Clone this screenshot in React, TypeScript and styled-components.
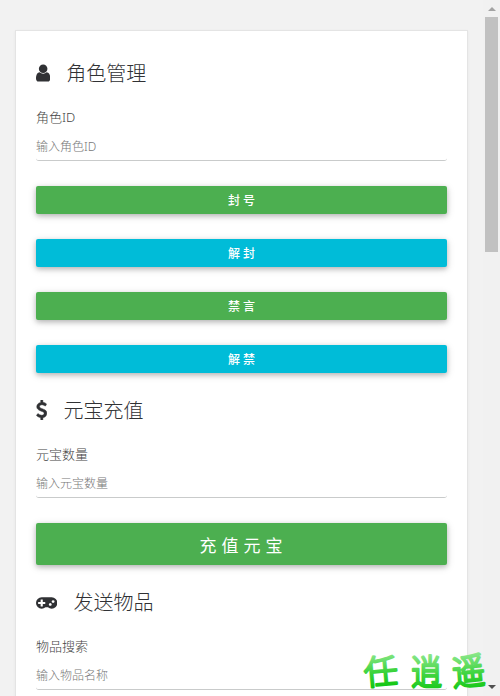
import React from 'react';
import styled, { createGlobalStyle } from 'styled-components';

const GlobalStyle = createGlobalStyle`
  * { box-sizing: border-box; }
  body { margin: 0; overflow: hidden; background: #f2f2f2; }
  button, input { font-family: inherit; }
`;

const Screen = styled.div`
  position: relative;
  display: flex;
  width: 500px;
  height: 696px;
  overflow: hidden;
  background: #f2f2f2;
  font-family: 'Noto Sans', 'Noto Sans CJK SC', sans-serif;
`;

const Page = styled.main`
  width: 483px;
  padding: 30px 15px 0;
`;

const Card = styled.section`
  height: 900px;
  padding: 27px 20px;
  background: #fff;
  border: 1px solid #e4e4e4;
  box-shadow: 0 1px 3px rgba(0, 0, 0, 0.05);
`;

const Heading = styled.h2`
  display: flex;
  align-items: center;
  gap: 16px;
  height: 30px;
  margin: 0 0 19px;
  color: #303134;
  font-family: 'Noto Sans CJK SC', sans-serif;
  font-size: 20px;
  font-weight: 300;
  line-height: 30px;
`;

const Icon = styled.svg<{ $width: number }>`
  flex: none;
  width: ${(p) => p.$width}px;
  height: 20px;
  fill: #303134;
`;

const Label = styled.label`
  display: block;
  height: 20px;
  color: #444;
  font-size: 13px;
  font-weight: 300;
  line-height: 20px;
`;

const Input = styled.input`
  display: block;
  width: 100%;
  height: 28px;
  margin: 6px 0 25px;
  padding: 0;
  color: #555;
  background: transparent;
  border: 0;
  border-bottom: 1px solid #c9cbcb;
  border-radius: 3px;
  outline: 0;
  font-size: 12px;
  font-weight: 300;
  &::placeholder { color: #777; opacity: 1; }
`;

const Button = styled.button<{ $tone: 'green' | 'cyan'; $large?: boolean }>`
  display: block;
  width: 100%;
  height: ${(p) => (p.$large ? 42 : 28)}px;
  margin: 0 0 ${(p) => (p.$large ? 22 : 25)}px;
  padding: ${(p) => (p.$large ? '2px 0 0 4px' : '2px 0 0 3px')};
  color: #fff;
  background: ${(p) => (p.$tone === 'green' ? '#4caf50' : '#00bcd8')};
  border: 0;
  border-radius: 2px;
  box-shadow: 0 2px 5px rgba(0, 0, 0, 0.22), 0 2px 10px rgba(0, 0, 0, 0.12);
  font-size: ${(p) => (p.$large ? 17 : 12)}px;
  font-weight: ${(p) => (p.$large ? 400 : 500)};
  line-height: 1;
  letter-spacing: ${(p) => (p.$large ? 5 : 3)}px;
`;

const Actions = styled.div`
  margin-bottom: -3px;
`;

const ScrollTrack = styled.div`
  display: flex;
  flex-direction: column;
  align-items: center;
  justify-content: space-between;
  width: 17px;
  padding: 7px 2px 7px;
  background: #f1f1f1;
`;

const ScrollThumb = styled.div`
  width: 13px;
  height: 235px;
  margin: 6px 0 auto;
  background: #c1c1c1;
`;

const Arrow = styled.div<{ $down?: boolean }>`
  width: 0;
  border: solid transparent;
  border-width: ${(p) => (p.$down ? '4px 4px 0' : '0 4px 4px')};
  border-top-color: ${(p) => (p.$down ? '#505050' : 'transparent')};
  border-bottom-color: ${(p) => (p.$down ? 'transparent' : '#a3a3a3')};
`;

const Watermark = styled.svg`
  position: absolute;
  left: 360px;
  top: 645px;
  width: 130px;
  height: 51px;
  pointer-events: none;
`;

const Brush = styled.text`
  fill: url(#ink);
  stroke: url(#ink);
  stroke-width: 2.2px;
  stroke-linejoin: round;
  stroke-linecap: round;
  font-family: 'Noto Sans CJK SC', sans-serif;
  font-weight: 300;
`;

function UserIcon() {
  return (
    <Icon $width={14.3} viewBox="256 0 1280 1792">
      <path d="M1536 1399q0 109-62.5 187t-150.5 78h-854q-88 0-150.5-78t-62.5-187q0-85 8.5-160.5t31.5-152 58.5-131 94-89 134.5-34.5q131 128 313 128t313-128q76 0 134.5 34.5t94 89 58.5 131 31.5 152 8.5 160.5zm-256-887q0 159-112.5 271.5t-271.5 112.5-271.5-112.5-112.5-271.5 112.5-271.5 271.5-112.5 271.5 112.5 112.5 271.5z" />
    </Icon>
  );
}

function DollarIcon() {
  return (
    <Icon $width={11.4} viewBox="384 0 1024 1792">
      <path stroke="#303134" strokeWidth="40" d="M1362 1185q0 153-99.5 263.5t-258.5 136.5v175q0 14-9 23t-23 9h-135q-13 0-22.5-9.5t-9.5-22.5v-175q-66-9-127.5-31t-101.5-44.5-74-48-46.5-37.5-17.5-18q-17-21-2-41l103-135q7-10 23-12 15-2 24 9l2 2q113 99 243 125 37 8 74 8 81 0 142.5-43t61.5-122q0-28-15-53t-33.5-42-58.5-37.5-66-32-80-32.5q-39-16-61.5-25t-61.5-26.5-62.5-31-56.5-35.5-53.5-42.5-43.5-49-35.5-58-21-66.5-8.5-78q0-138 98-242t255-134v-180q0-13 9.5-22.5t22.5-9.5h135q14 0 23 9t9 23v176q57 6 110.5 23t87 33.5 63.5 37.5 39 29 15 14q17 18 5 38l-81 146q-8 15-23 16-14 3-27-7-3-3-14.5-12t-39-26.5-58.5-32-74.5-26-85.5-11.5q-95 0-155 43t-60 111q0 26 8.5 48t29.5 41.5 39.5 33 56 31 60.5 27 70 27.5q53 20 81 31.5t76 35 75.5 42.5 62 50 53 63.5 31.5 76.5 13 94z" />
    </Icon>
  );
}

function GamepadIcon() {
  return (
    <Icon $width={21.4} viewBox="0 40 1920 1792">
      <path d="M832 1088v-128q0-14-9-23t-23-9h-192v-192q0-14-9-23t-23-9h-128q-14 0-23 9t-9 23v192h-192q-14 0-23 9t-9 23v128q0 14 9 23t23 9h192v192q0 14 9 23t23 9h128q14 0 23-9t9-23v-192h192q14 0 23-9t9-23zm576 64q0-53-37.5-90.5t-90.5-37.5-90.5 37.5-37.5 90.5 37.5 90.5 90.5 37.5 90.5-37.5 37.5-90.5zm256-256q0-53-37.5-90.5t-90.5-37.5-90.5 37.5-37.5 90.5 37.5 90.5 90.5 37.5 90.5-37.5 37.5-90.5zm256 128q0 212-150 362t-362 150q-192 0-338-128h-220q-146 128-338 128-212 0-362-150t-150-362 150-362 362-150h896q212 0 362 150t150 362z" />
    </Icon>
  );
}

export default function App() {
  return (
    <>
      <GlobalStyle />
      <Screen>
        <Page>
          <Card>
            <Heading><UserIcon />角色管理</Heading>
            <Label htmlFor="role">角色ID</Label>
            <Input id="role" placeholder="输入角色ID" />
            <Actions>
              <Button $tone="green">封号</Button>
              <Button $tone="cyan">解封</Button>
              <Button $tone="green">禁言</Button>
              <Button $tone="cyan">解禁</Button>
            </Actions>
            <Heading><DollarIcon />元宝充值</Heading>
            <Label htmlFor="amount">元宝数量</Label>
            <Input id="amount" placeholder="输入元宝数量" />
            <Button $tone="green" $large>充值元宝</Button>
            <Heading><GamepadIcon />发送物品</Heading>
            <Label htmlFor="item">物品搜索</Label>
            <Input id="item" placeholder="输入物品名称" />
          </Card>
        </Page>
        <ScrollTrack>
          <Arrow />
          <ScrollThumb />
          <Arrow $down />
        </ScrollTrack>
        <Watermark viewBox="0 0 130 51">
          <defs>
            <linearGradient id="ink" gradientUnits="userSpaceOnUse" x1="0" y1="8" x2="0" y2="44">
              <stop offset="0" stopColor="#8be78b" />
              <stop offset="0.5" stopColor="#3fd43f" />
              <stop offset="1" stopColor="#0cc40c" />
            </linearGradient>
          </defs>
          <Brush x="4" y="39" fontSize="34" transform="rotate(-5 21 27)">任</Brush>
          <Brush x="51" y="35" fontSize="31" transform="scale(1 1.15)">逍</Brush>
          <Brush x="92" y="36" fontSize="33" transform="scale(1 1.1) rotate(-5 108 24)">遥</Brush>
        </Watermark>
      </Screen>
    </>
  );
}
